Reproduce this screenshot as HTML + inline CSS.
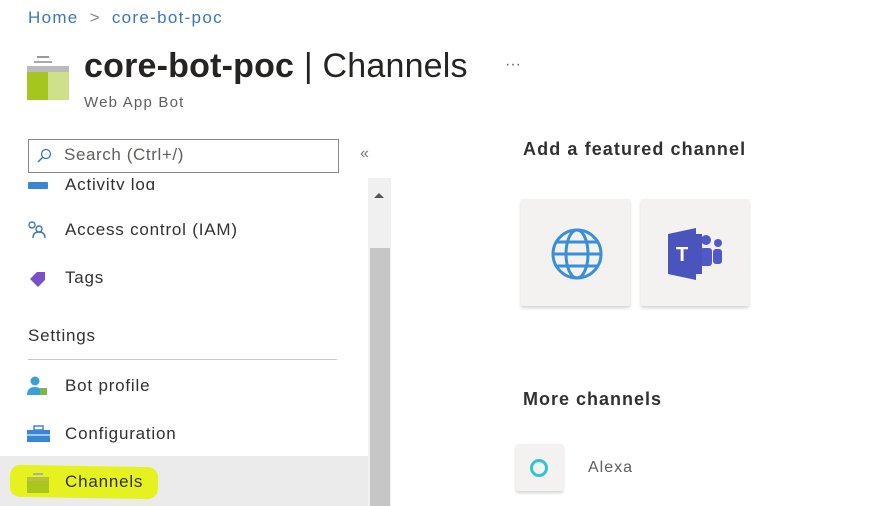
<!DOCTYPE html>
<html><head><style>
body{margin:0;width:870px;height:506px;background:#fff;font-family:"Liberation Sans",sans-serif;position:relative;overflow:hidden;color:#323130}
.a{position:absolute;white-space:nowrap}
.item{position:absolute;left:65px;font-size:17px;letter-spacing:0.8px;color:#323130}
.tile{position:absolute;background:#f3f2f1;box-shadow:0 2px 3px rgba(0,0,0,.18);border-radius:2px}
</style></head><body>
<div class="a" style="left:28px;top:8px;font-size:17px;letter-spacing:1.3px;color:#3a78b5">Home <span style="color:#888;margin:0 5px">&gt;</span> core-bot-poc</div>
<svg class="a" style="left:27px;top:56px" width="43" height="45" viewBox="0 0 43 45">
<rect x="10" y="0" width="12" height="2" fill="#999"/><rect x="7" y="5" width="18" height="2" fill="#aaa"/>
<rect x="0" y="10" width="42" height="6" fill="#bbb"/>
<rect x="0" y="16" width="21" height="28" fill="#a4c61f"/><rect x="21" y="16" width="21" height="28" fill="#cfe08a"/></svg>
<div class="a" style="left:84px;top:47px;font-size:34px;letter-spacing:0.2px;color:#252423"><b style="font-weight:600">core-bot-poc</b> | Channels</div>
<div class="a" style="left:505px;top:56px;font-size:16px;color:#666">···</div>
<div class="a" style="left:84px;top:94px;font-size:15px;letter-spacing:1.2px;color:#605e5c">Web App Bot</div>
<div class="a" style="left:28px;top:139px;width:311px;height:34px;border:1px solid #8a8886;box-sizing:border-box"></div>
<svg class="a" style="left:36px;top:148px" width="16" height="16"><circle cx="10" cy="6" r="4.5" fill="none" stroke="#3a78b5" stroke-width="1.3"/><line x1="7" y1="9" x2="2" y2="14" stroke="#3a78b5" stroke-width="1.5"/></svg>
<div class="a" style="left:64px;top:145px;font-size:17px;letter-spacing:0.6px;color:#605e5c">Search (Ctrl+/)</div>
<div class="a" style="left:360px;top:145px;font-size:16px;color:#777">«</div>
<div class="a" style="left:28px;top:182px;width:20px;height:7px;background:#3a85d4;border-radius:1px"></div>
<div class="a" style="left:65px;top:172px;font-size:17px;letter-spacing:0.8px;color:#323130;height:18px;overflow:hidden;line-height:18px"><span style="position:relative;top:4px">Activity log</span></div>
<div class="a" style="left:368px;top:178px;width:23px;height:328px;background:#f0f0f0"></div>
<div class="a" style="left:370px;top:248px;width:20px;height:258px;background:#c6c6c6"></div>
<div class="a" style="left:374px;top:193px;width:0;height:0;border-left:5px solid transparent;border-right:5px solid transparent;border-bottom:5px solid #555"></div>
<svg class="a" style="left:27px;top:221px" width="22" height="18"><circle cx="5" cy="4" r="3" fill="none" stroke="#3a78b5" stroke-width="1.4"/><circle cx="12" cy="8" r="3" fill="none" stroke="#3a78b5" stroke-width="1.4"/><path d="M6 17q0-6 6-6q6 0 6 6" fill="none" stroke="#3a78b5" stroke-width="1.4"/></svg>
<div class="item" style="top:220px">Access control (IAM)</div>
<svg class="a" style="left:28px;top:270px" width="20" height="18"><path d="M2 9 L9 2 H17 V10 L10 17 Z" fill="#7b4fc9"/></svg>
<div class="item" style="top:268px">Tags</div>
<div class="a" style="left:28px;top:326px;font-size:17px;letter-spacing:0.8px;color:#323130">Settings</div>
<div class="a" style="left:28px;top:359px;width:309px;height:1px;background:#c8c6c4"></div>
<svg class="a" style="left:27px;top:376px" width="22" height="20"><circle cx="8" cy="5" r="4.5" fill="#3aa0d8"/><path d="M0 19q0-8 8-8q7 0 8 8z" fill="#3aa0d8"/><rect x="13" y="12" width="7" height="7" fill="#7bb84a"/></svg>
<div class="item" style="top:376px">Bot profile</div>
<svg class="a" style="left:27px;top:425px" width="23" height="18"><rect x="7" y="1" width="9" height="4" fill="none" stroke="#3a85d4" stroke-width="1.5"/><rect x="0" y="5" width="23" height="12" fill="#3a85d4"/><rect x="0" y="9" width="23" height="2" fill="#9cc9f0"/></svg>
<div class="item" style="top:424px">Configuration</div>
<div class="a" style="left:0;top:456px;width:368px;height:50px;background:#ebebeb"></div>
<div class="a" style="left:10px;top:466px;width:148px;height:32px;background:#e6f21f;border-radius:10px;transform:rotate(1deg)"></div>
<svg class="a" style="left:27px;top:473px" width="22" height="20"><rect x="6" y="0" width="10" height="2" fill="#aab"/><rect x="0" y="4" width="22" height="4" fill="#b8c040"/><rect x="0" y="8" width="22" height="12" fill="#a8c61f"/></svg>
<div class="item" style="top:472px">Channels</div>
<div class="a" style="left:523px;top:139px;font-size:18px;letter-spacing:1.1px;font-weight:bold;color:#323130">Add a featured channel</div>
<div class="tile" style="left:521px;top:199px;width:109px;height:107px"></div>
<svg class="a" style="left:551px;top:228px" width="52" height="52" viewBox="0 0 52 52" fill="none" stroke="#3a8fd8" stroke-width="3"><circle cx="26" cy="26" r="24"/><ellipse cx="26" cy="26" rx="11" ry="24"/><line x1="2" y1="26" x2="50" y2="26"/><line x1="6" y1="14" x2="46" y2="14"/><line x1="6" y1="38" x2="46" y2="38"/></svg>
<div class="tile" style="left:641px;top:199px;width:108px;height:107px"></div>
<svg class="a" style="left:666px;top:226px" width="58" height="56" viewBox="0 0 58 56"><circle cx="40" cy="14" r="5" fill="#5059c9"/><circle cx="52" cy="17" r="4" fill="#5059c9"/><rect x="34" y="22" width="12" height="18" rx="3" fill="#5059c9"/><rect x="47" y="23" width="9" height="15" rx="3" fill="#5059c9"/><path d="M2 8 L30 2 V54 L2 48Z" fill="#4b53bc"/><rect x="26" y="8" width="10" height="40" fill="#4b53bc"/><text x="10" y="35" fill="#fff" font-family="Liberation Sans" font-weight="bold" font-size="20">T</text></svg>
<div class="a" style="left:523px;top:389px;font-size:18px;letter-spacing:1px;font-weight:bold;color:#323130">More channels</div>
<div class="tile" style="left:516px;top:444px;width:47px;height:47px"></div>
<svg class="a" style="left:528px;top:457px" width="22" height="22"><circle cx="11" cy="11" r="7.5" fill="none" stroke="#31c4d8" stroke-width="3"/></svg>
<div class="a" style="left:588px;top:459px;font-size:16px;letter-spacing:1px;color:#605e5c">Alexa</div>
</body></html>
